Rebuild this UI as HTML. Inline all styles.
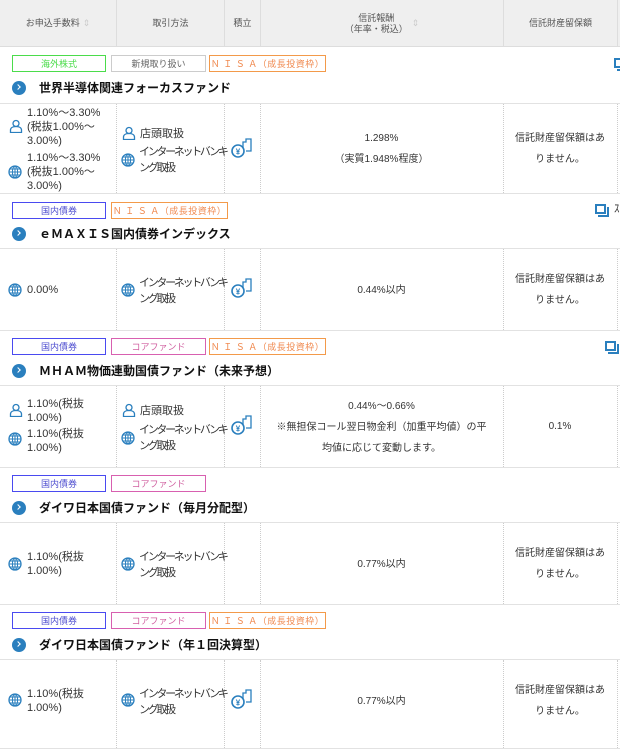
<!DOCTYPE html>
<html><head><meta charset="utf-8"><style>
*{margin:0;padding:0;box-sizing:border-box}
body{width:620px;height:744px;overflow:hidden;background:#fff;font-family:"Liberation Sans","Noto Sans CJK JP",sans-serif;color:#333;position:relative;font-size:10px}
.a{position:absolute}
.hd{left:0;top:0;width:620px;height:47px;background:#efefef;border-bottom:1px solid #ddd}
.hc{position:absolute;top:0;height:47px;display:flex;align-items:center;justify-content:center;text-align:center;font-size:9px;color:#555;line-height:11px;border-left:1px solid #ddd}
.tag{position:absolute;height:17px;border:1.5px solid;font-size:9px;display:flex;align-items:center;justify-content:center;background:#fff;white-space:nowrap}
.g{border-color:#4bdc4b;color:#4bdc4b}.gr{border-color:#ccc;color:#666}.o{border-color:#f39a4a;color:#f08a50;letter-spacing:0.5px}.b{border-color:#4a4af0;color:#5050d0}.p{border-color:#d860b0;color:#d060a0}
.ttl{position:absolute;left:12px;font-size:12px;font-weight:bold;color:#111;display:flex;align-items:center}
.ttl i{display:inline-block;width:14px;height:14px;border-radius:50%;background:#2a7fbe;margin-right:13px;position:relative}
.ttl i:after{content:"";position:absolute;left:4px;top:4.5px;width:3px;height:3px;border-top:1.5px solid #fff;border-right:1.5px solid #fff;transform:rotate(45deg)}
.row{position:absolute;left:0;width:620px;border-top:1px solid #e2e2e2;border-bottom:1px solid #e2e2e2}
.vl{position:absolute;top:0;bottom:0;border-left:1px dotted #ccc}
.t{position:absolute;font-size:11px;line-height:14px;color:#333}
.k{letter-spacing:-2.3px;line-height:16px}
.c{text-align:center;line-height:21px;font-size:10px}
.ic{position:absolute}
.cp{position:absolute;width:11px;height:10px;border:2px solid #2a7fbe}
.cp:after{content:"";position:absolute;left:1px;top:1px;width:9px;height:8px;border-right:2px solid #2a7fbe;border-bottom:2px solid #2a7fbe}
</style></head><body>
<svg width="0" height="0" style="position:absolute"><defs>
<symbol id="per" viewBox="0 0 14 14"><circle cx="7" cy="4.5" r="3" fill="none" stroke="#2a7fbe" stroke-width="1.3"/><path d="M1.5 13.5v-2.5c0-2 2-3.5 5.5-3.5s5.5 1.5 5.5 3.5v2.5z" fill="none" stroke="#2a7fbe" stroke-width="1.3"/></symbol>
<symbol id="glb" viewBox="0 0 14 14"><circle cx="7" cy="7" r="6" fill="none" stroke="#2a7fbe" stroke-width="1.3"/><ellipse cx="7" cy="7" rx="2.6" ry="6" fill="none" stroke="#2a7fbe" stroke-width="1"/><path d="M1 7h12M2 4h10M2 10h10M7 1v12" stroke="#2a7fbe" stroke-width="1"/></symbol>
<symbol id="coin" viewBox="0 0 22 24"><path d="M12 14v-6h3v-3h5v12h-5" fill="none" stroke="#2a7fbe" stroke-width="1.3"/><circle cx="7" cy="17" r="6" fill="#fff" stroke="#2a7fbe" stroke-width="1.6"/><text x="7" y="20.5" font-size="8" font-weight="bold" text-anchor="middle" fill="#2a7fbe" font-family="Liberation Sans">¥</text></symbol>
</defs></svg>

<div class="a hd">
<div class="hc" style="left:0;width:116px;border-left:none">お申込手数料 <span style="color:#ccc;margin-left:3px">⇕</span></div>
<div class="hc" style="left:116px;width:108px">取引方法</div>
<div class="hc" style="left:224px;width:36px">積立</div>
<div class="hc" style="left:260px;width:243px">信託報酬<br>（年率・税込）<span style="color:#ccc;margin-left:4px">⇕</span></div>
<div class="hc" style="left:503px;width:114px">信託財産留保額</div>
<div class="hc" style="left:617px;width:3px"></div>
</div>

<!-- Fund 1 -->
<div class="tag g" style="left:12px;top:55px;width:94px">海外株式</div>
<div class="tag gr" style="left:111px;top:55px;width:95px">新規取り扱い</div>
<div class="tag o" style="left:209px;top:55px;width:117px">Ｎ Ｉ Ｓ Ａ（成長投資枠）</div>
<div class="cp" style="left:614px;top:58px"></div>
<div class="ttl" style="top:79px"><i></i>世界半導体関連フォーカスファンド</div>
<div class="row" style="top:103px;height:91px">
<div class="vl" style="left:116px"></div><div class="vl" style="left:224px"></div><div class="vl" style="left:260px"></div><div class="vl" style="left:503px"></div><div class="vl" style="left:617px"></div>
<svg class="ic" style="left:9px;top:15px" width="14" height="14"><use href="#per"/></svg>
<div class="t" style="left:27px;top:2px">1.10%～3.30%<br>(税抜1.00%～<br>3.00%)</div>
<svg class="ic" style="left:8px;top:61px" width="14" height="14"><use href="#glb"/></svg>
<div class="t" style="left:27px;top:47px">1.10%～3.30%<br>(税抜1.00%～<br>3.00%)</div>
<svg class="ic" style="left:122px;top:22px" width="14" height="14"><use href="#per"/></svg>
<div class="t" style="left:140px;top:23px">店頭取扱</div>
<svg class="ic" style="left:121px;top:49px" width="14" height="14"><use href="#glb"/></svg>
<div class="t k" style="left:139px;top:40px">インターネットバンキ<br>ング取扱</div>
<svg class="ic" style="left:231px;top:30px" width="22" height="24"><use href="#coin"/></svg>
<div class="t c" style="left:260px;width:243px;top:24px">1.298%<br>（実質1.948%程度）</div>
<div class="t c" style="left:503px;width:114px;top:24px">信託財産留保額はあ<br>りません。</div>
</div>

<!-- Fund 2 -->
<div class="tag b" style="left:12px;top:202px;width:94px">国内債券</div>
<div class="tag o" style="left:111px;top:202px;width:117px">Ｎ Ｉ Ｓ Ａ（成長投資枠）</div>
<div class="cp" style="left:595px;top:204px"></div>
<div class="t" style="left:614px;top:202px">ｽ</div>
<div class="ttl" style="top:225px"><i></i>ｅＭＡＸＩＳ国内債券インデックス</div>
<div class="row" style="top:248px;height:83px">
<div class="vl" style="left:116px"></div><div class="vl" style="left:224px"></div><div class="vl" style="left:260px"></div><div class="vl" style="left:503px"></div><div class="vl" style="left:617px"></div>
<svg class="ic" style="left:8px;top:34px" width="14" height="14"><use href="#glb"/></svg>
<div class="t" style="left:27px;top:34px">0.00%</div>
<svg class="ic" style="left:121px;top:34px" width="14" height="14"><use href="#glb"/></svg>
<div class="t k" style="left:139px;top:26px">インターネットバンキ<br>ング取扱</div>
<svg class="ic" style="left:231px;top:25px" width="22" height="24"><use href="#coin"/></svg>
<div class="t c" style="left:260px;width:243px;top:31px">0.44%以内</div>
<div class="t c" style="left:503px;width:114px;top:20px">信託財産留保額はあ<br>りません。</div>
</div>

<!-- Fund 3 -->
<div class="tag b" style="left:12px;top:338px;width:94px">国内債券</div>
<div class="tag p" style="left:111px;top:338px;width:95px">コアファンド</div>
<div class="tag o" style="left:209px;top:338px;width:117px">Ｎ Ｉ Ｓ Ａ（成長投資枠）</div>
<div class="cp" style="left:605px;top:341px"></div>
<div class="ttl" style="top:362px"><i></i>ＭＨＡＭ物価連動国債ファンド（未来予想）</div>
<div class="row" style="top:385px;height:83px">
<div class="vl" style="left:116px"></div><div class="vl" style="left:224px"></div><div class="vl" style="left:260px"></div><div class="vl" style="left:503px"></div><div class="vl" style="left:617px"></div>
<svg class="ic" style="left:9px;top:17px" width="14" height="14"><use href="#per"/></svg>
<div class="t" style="left:27px;top:11px">1.10%(税抜<br>1.00%)</div>
<svg class="ic" style="left:8px;top:46px" width="14" height="14"><use href="#glb"/></svg>
<div class="t" style="left:27px;top:41px">1.10%(税抜<br>1.00%)</div>
<svg class="ic" style="left:122px;top:17px" width="14" height="14"><use href="#per"/></svg>
<div class="t" style="left:140px;top:18px">店頭取扱</div>
<svg class="ic" style="left:121px;top:45px" width="14" height="14"><use href="#glb"/></svg>
<div class="t k" style="left:139px;top:36px">インターネットバンキ<br>ング取扱</div>
<svg class="ic" style="left:231px;top:25px" width="22" height="24"><use href="#coin"/></svg>
<div class="t c" style="left:260px;width:243px;top:10px">0.44%～0.66%<br>※無担保コール翌日物金利（加重平均値）の平<br>均値に応じて変動します。</div>
<div class="t c" style="left:503px;width:114px;top:30px">0.1%</div>
</div>

<!-- Fund 4 -->
<div class="tag b" style="left:12px;top:475px;width:94px">国内債券</div>
<div class="tag p" style="left:111px;top:475px;width:95px">コアファンド</div>
<div class="ttl" style="top:499px"><i></i>ダイワ日本国債ファンド（毎月分配型）</div>
<div class="row" style="top:522px;height:83px">
<div class="vl" style="left:116px"></div><div class="vl" style="left:224px"></div><div class="vl" style="left:260px"></div><div class="vl" style="left:503px"></div><div class="vl" style="left:617px"></div>
<svg class="ic" style="left:8px;top:34px" width="14" height="14"><use href="#glb"/></svg>
<div class="t" style="left:27px;top:27px">1.10%(税抜<br>1.00%)</div>
<svg class="ic" style="left:121px;top:34px" width="14" height="14"><use href="#glb"/></svg>
<div class="t k" style="left:139px;top:26px">インターネットバンキ<br>ング取扱</div>
<div class="t c" style="left:260px;width:243px;top:31px">0.77%以内</div>
<div class="t c" style="left:503px;width:114px;top:20px">信託財産留保額はあ<br>りません。</div>
</div>

<!-- Fund 5 -->
<div class="tag b" style="left:12px;top:612px;width:94px">国内債券</div>
<div class="tag p" style="left:111px;top:612px;width:95px">コアファンド</div>
<div class="tag o" style="left:209px;top:612px;width:117px">Ｎ Ｉ Ｓ Ａ（成長投資枠）</div>
<div class="ttl" style="top:636px"><i></i>ダイワ日本国債ファンド（年１回決算型）</div>
<div class="row" style="top:659px;height:90px">
<div class="vl" style="left:116px"></div><div class="vl" style="left:224px"></div><div class="vl" style="left:260px"></div><div class="vl" style="left:503px"></div><div class="vl" style="left:617px"></div>
<svg class="ic" style="left:8px;top:33px" width="14" height="14"><use href="#glb"/></svg>
<div class="t" style="left:27px;top:27px">1.10%(税抜<br>1.00%)</div>
<svg class="ic" style="left:121px;top:33px" width="14" height="14"><use href="#glb"/></svg>
<div class="t k" style="left:139px;top:26px">インターネットバンキ<br>ング取扱</div>
<svg class="ic" style="left:231px;top:25px" width="22" height="24"><use href="#coin"/></svg>
<div class="t c" style="left:260px;width:243px;top:31px">0.77%以内</div>
<div class="t c" style="left:503px;width:114px;top:20px">信託財産留保額はあ<br>りません。</div>
</div>
</body></html>
